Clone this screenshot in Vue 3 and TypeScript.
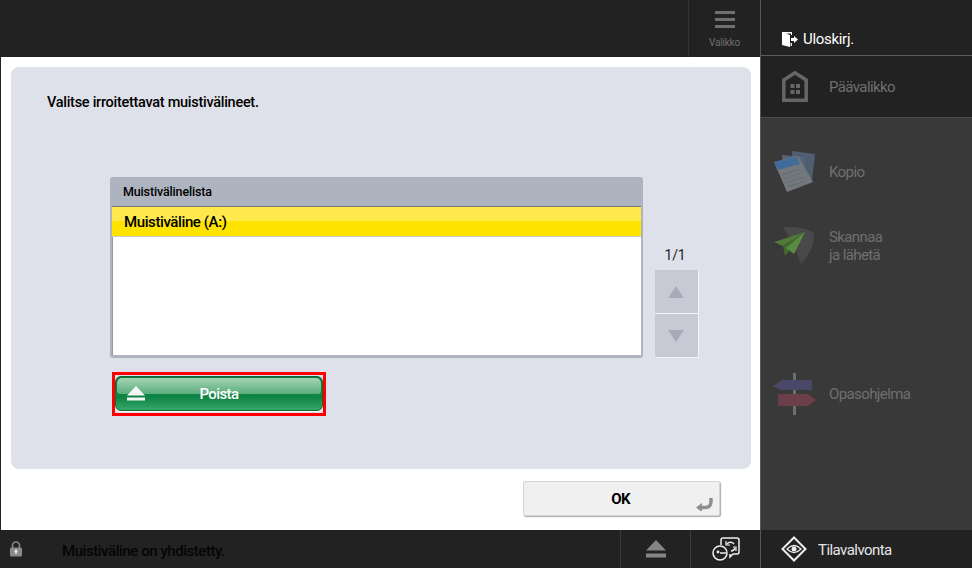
<script setup lang="ts">
const apps = [
  { key: 'copy', lines: ['Kopio'] },
  { key: 'send', lines: ['Skannaa', 'ja lähetä'] },
  { key: 'empty', lines: [] as string[] },
  { key: 'guide', lines: ['Opasohjelma'] },
]
</script>

<template>
  <div class="screen">
    <div class="main">
      <header class="topbar">
        <div class="menu-btn">
          <svg width="20" height="18" viewBox="0 0 20 18">
            <path d="M0 1.5h20M0 8.5h20M0 15.5h20" stroke="#6f6f6f" stroke-width="3" />
          </svg>
          <span>Valikko</span>
        </div>
      </header>

      <div class="content">
        <section class="panel">
          <p class="prompt">Valitse irroitettavat muistivälineet.</p>
          <div class="list-row">
            <div class="list">
              <div class="list-head">Muistivälinelista</div>
              <div class="list-body">
                <div class="list-item">Muistiväline (A:)</div>
              </div>
            </div>
            <div class="pager">
              <span class="page-no">1/1</span>
              <div class="page-btns">
                <button class="page-btn"><i class="tri up"></i></button>
                <button class="page-btn"><i class="tri down"></i></button>
              </div>
            </div>
          </div>
          <div class="eject-frame">
            <button class="eject">
              <svg class="eject-icon" width="18" height="15" viewBox="0 0 18 15">
                <path d="M9 0l9 9.5H0z" fill="#f2f7f3" />
                <rect y="11.5" width="18" height="3" fill="#f2f7f3" />
              </svg>
              <span class="eject-label">Poista</span>
            </button>
          </div>
        </section>
        <div class="actions">
          <button class="ok">
            OK
            <svg class="enter" width="18" height="14" viewBox="0 0 18 14">
              <path d="M15 1v3.500q0 6-6 6H4" fill="none" stroke="#8f8f8f" stroke-width="3.4" />
              <path d="M0 10.5l6-4.500v9z" fill="#8f8f8f" />
            </svg>
          </button>
        </div>
      </div>

      <footer class="status">
        <svg class="lock" width="14" height="16" viewBox="0 0 14 16">
          <path d="M3.5 7V4.5a3.5 3.5 0 0 1 7 0V7" fill="none" stroke="#8a8a8a" stroke-width="1.6" />
          <rect x="1" y="6.5" width="12" height="9" rx="1.5" fill="#8a8a8a" />
          <circle cx="7" cy="10" r="1.5" fill="#eee" />
          <rect x="6.3" y="10" width="1.4" height="3.2" fill="#eee" />
        </svg>
        <span class="status-text">Muistiväline on yhdistetty.</span>
        <div class="status-cell">
          <svg width="20" height="18" viewBox="0 0 20 18">
            <path d="M10 0l10 10.5H0z" fill="#858585" />
            <rect y="13.5" width="20" height="4" fill="#858585" />
          </svg>
        </div>
        <div class="status-cell">
          <svg width="28" height="24" viewBox="0 0 28 24" fill="none" stroke="#f0f0f0" stroke-width="1.5">
            <path d="M9 8V3q0-2 2-2h14q2 0 2 2v12q0 2-2 2h-4l-3 3v-3" />
            <circle cx="8" cy="16" r="7" fill="#222" />
            <circle cx="6" cy="15" r="1.4" fill="#f0f0f0" stroke="none" />
            <path d="M8 16h6" />
            <path d="M15 7a4.500 4.500 0 0 1 7 0M23 11a4.500 4.500 0 0 1-4 3" />
            <path d="M14 4v4h4M24 14v-4h-3" stroke-width="1.2" />
          </svg>
        </div>
      </footer>
    </div>

    <aside class="side">
      <div class="logout">
        <svg width="16" height="15" viewBox="0 0 16 15">
          <path d="M0 0h10v3H9V1.500H4L8 3v12L0 13z" fill="#fff" />
          <path d="M8.500 11H10v3H8.500z" fill="#ddd" />
          <path d="M9 6h3V4l4 3.500-4 3.500V9H9z" fill="#fff" />
        </svg>
        <span>Uloskirj.</span>
      </div>
      <div class="home">
        <svg width="26" height="31" viewBox="0 0 26 31">
          <path d="M13 1.700L24.200 9v20.200H1.800V9z" fill="none" stroke="#666" stroke-width="3.500" />
          <path d="M8.500 13h4v4h-4zM14 13h4v4h-4zM8.500 19h4v4h-4zM14 19h4v4h-4z" fill="#666" />
        </svg>
        <span class="app-label">Päävalikko</span>
      </div>
      <div class="apps">
        <div v-for="app in apps" :key="app.key" class="app">
          <div class="app-icon">
            <svg v-if="app.key === 'copy'" width="42" height="44" viewBox="0 0 42 44">
              <path d="M18 1l23 3-3 26-20-4z" fill="#4f5e70" />
              <path d="M8 5l22 2 2 24-22 2z" fill="#566679" />
              <path d="M0 12l24-6 15 26-26 10z" fill="#73787d" />
              <path d="M0 12l23-5 3 7-23 6z" fill="#3f6c99" />
              <path d="M8 25l17-6M10 29l17-6M12 33l17-6M14 37l17-6" stroke="#666b70" stroke-width="1" />
            </svg>
            <svg v-else-if="app.key === 'send'" width="42" height="38" viewBox="0 0 42 38">
              <path d="M9 0q21-1 31 6 1 16-13 31Q22 22 9 0z" fill="#494949" />
              <path d="M31 5L0 15l9 4z" fill="#4f7a3a" />
              <path d="M31 5L9 19l2 10z" fill="#42692f" />
              <path d="M31 5L12 21l8 6z" fill="#5b8a43" />
            </svg>
            <svg v-else-if="app.key === 'guide'" width="44" height="42" viewBox="0 0 44 42">
              <rect x="20" y="0" width="3" height="42" fill="#6e6e6e" />
              <path d="M0 13l9-6h30v10H8z" fill="#4a4868" />
              <path d="M5 21h30l8 6-8 6H5z" fill="#6a3f4a" />
            </svg>
          </div>
          <span class="app-label">
            <template v-for="line in app.lines" :key="line">{{ line }}<br /></template>
          </span>
        </div>
      </div>
      <div class="monitor">
        <svg width="26" height="26" viewBox="0 0 26 26" fill="none" stroke="#eee">
          <path d="M13 1.500L24.500 13 13 24.500 1.500 13z" stroke-width="2" />
          <path d="M6 13q7-7 14 0q-7 7-14 0z" stroke-width="1.200" />
          <circle cx="13" cy="13" r="2.500" fill="#eee" stroke="none" />
        </svg>
        <span>Tilavalvonta</span>
      </div>
    </aside>
  </div>
</template>

<style>
html,
body {
  margin: 0;
  overflow: hidden;
}
</style>

<style scoped>
.screen {
  display: grid;
  grid-template-columns: 760px 212px;
  width: 972px;
  height: 568px;
  font-family: Roboto, "Liberation Sans", sans-serif;
  overflow: hidden;
  background: #fff;
}

.main {
  display: flex;
  flex-direction: column;
  height: 568px;
}

.topbar {
  display: flex;
  justify-content: flex-end;
  height: 57px;
  flex-shrink: 0;
  background: #222;
}

.menu-btn {
  display: flex;
  flex-direction: column;
  align-items: center;
  width: 72px;
  padding-top: 11px;
  box-sizing: border-box;
  border-left: 1px solid #333;
  color: #6e6e6e;
  font-size: 10px;
  letter-spacing: -0.2px;
}

.menu-btn span {
  margin-top: 8px;
}

.content {
  display: flex;
  flex: 1;
  flex-direction: column;
  border-left: 1px solid #222;
  padding: 10px 9px 0 10px;
}

.panel {
  height: 402px;
  box-sizing: border-box;
  border-radius: 8px;
  background: #dfe1ea;
  padding: 27px 0 0 36px;
}

.prompt {
  margin: 0;
  color: #000;
  font-size: 14.500px;
  line-height: 17px;
  font-weight: 500;
  letter-spacing: -0.28px;
}

.list-row {
  display: flex;
  align-items: flex-end;
  gap: 12px;
  margin: 66px 0 0 63px;
}

.list {
  width: 533px;
  height: 181px;
  box-sizing: border-box;
  border-radius: 3px;
  background: #aeb3c0;
  padding: 0 2px 3px 2px;
}

.list-head {
  height: 29px;
  padding-left: 11px;
  color: #000;
  font-size: 12.500px;
  font-weight: 500;
  line-height: 29px;
  letter-spacing: -0.15px;
}

.list-body {
  height: 149px;
  box-sizing: border-box;
  border-top: 1px solid #777;
  background: #fff;
  box-shadow: inset 1px 0 0 #999;
}

.list-item {
  height: 30px;
  box-sizing: border-box;
  border-bottom: 1px solid #ccc;
  background: linear-gradient(180deg, #ffe94d 0 50%, #ffe400 50% 100%);
  padding-left: 12px;
  color: #000;
  font-size: 15px;
  font-weight: 500;
  line-height: 31px;
  letter-spacing: -0.4px;
}

.pager {
  display: flex;
  flex-direction: column;
  align-items: center;
  width: 43px;
}

.page-no {
  margin: 0 3px 7px 0;
  color: #222;
  font-size: 14px;
  line-height: 16px;
  letter-spacing: -0.2px;
}

.page-btns {
  display: flex;
  flex-direction: column;
  gap: 1px;
  background: #f3f4f8;
  border-radius: 2px;
  padding: 0 1px 1px 0;
}

.page-btn {
  display: flex;
  align-items: center;
  justify-content: center;
  width: 43px;
  height: 43px;
  border: 0;
  background: #c7cad5;
  padding: 0;
}

.tri {
  width: 0;
  height: 0;
  border-left: 8px solid transparent;
  border-right: 8px solid transparent;
}

.tri.up {
  border-bottom: 12px solid #a7abb8;
}

.tri.down {
  border-top: 12px solid #a7abb8;
}

.eject-frame {
  width: 214px;
  height: 44px;
  box-sizing: border-box;
  margin: 14px 0 0 65px;
  border: 3px solid #f00;
  padding: 1px 0 2px;
  background: #dfe1ea;
}

.eject {
  position: relative;
  display: block;
  width: 100%;
  height: 100%;
  border: 1px solid #0a6b35;
  border-radius: 6px;
  background: linear-gradient(180deg, #0b7a3c 0%, #0f8545 62%, #35a86a 100%);
  color: #fff;
  font-family: inherit;
  font-size: 15px;
  font-weight: 500;
  letter-spacing: -0.6px;
  box-shadow: 0 1px 0 #fff;
  padding: 0;
}

.eject::before {
  content: '';
  position: absolute;
  top: 1px;
  left: 1px;
  right: 1px;
  height: 16px;
  border-radius: 5px 5px 3px 3px;
  background: linear-gradient(180deg, #a3d4b3 0%, #5bad7d 100%);
}

.eject-icon {
  position: absolute;
  left: 11px;
  top: 9px;
}

.eject-label {
  position: relative;
}

.actions {
  display: flex;
  justify-content: flex-end;
  padding: 12px 31px 0 0;
}

.ok {
  position: relative;
  width: 197px;
  height: 35px;
  border: 1px solid #d4d4d4;
  border-radius: 2px;
  background: #f0f0f0;
  box-shadow: 1px 1px 1px #aaa;
  color: #000;
  font-family: inherit;
  font-size: 15px;
  font-weight: 700;
  letter-spacing: -0.8px;
  padding: 0 2px 0 0;
}

.enter {
  position: absolute;
  right: 5px;
  bottom: 4px;
}

.status {
  display: flex;
  align-items: center;
  height: 38px;
  flex-shrink: 0;
  background: #222;
}

.lock {
  margin-left: 9px;
}

.status-text {
  flex: 1;
  margin: 4px 0 0 39px;
  color: #050505;
  font-size: 15px;
  font-weight: 500;
  letter-spacing: -0.45px;
}

.status-cell {
  display: flex;
  align-items: center;
  justify-content: center;
  width: 70px;
  height: 38px;
  box-sizing: border-box;
  border-left: 1px solid #3a3a3a;
}

.side {
  display: flex;
  flex-direction: column;
  border-left: 1px solid #585858;
  box-sizing: border-box;
  height: 568px;
  background: #393939;
}

.logout {
  display: flex;
  align-items: center;
  gap: 5px;
  height: 56px;
  box-sizing: border-box;
  border-bottom: 1px solid #5c5c5c;
  background: #222;
  padding: 23px 0 0 21px;
  color: #fff;
  font-size: 15px;
  letter-spacing: -0.3px;
}

.home {
  display: flex;
  align-items: center;
  height: 62px;
  flex-shrink: 0;
  box-sizing: border-box;
  border-bottom: 1px solid #4c4c4c;
  background: #222;
  padding-left: 21px;
}

.home .app-label {
  margin-left: 21px;
}

.app-label {
  color: #6f6f6f;
  font-size: 15px;
  line-height: 18px;
  letter-spacing: -0.6px;
}

.apps {
  flex: 1;
  padding-top: 17px;
}

.app {
  display: flex;
  align-items: center;
  height: 74px;
  padding-left: 12px;
}

.app-icon {
  display: flex;
  justify-content: center;
  width: 44px;
  margin-right: 12px;
}

.monitor {
  display: flex;
  align-items: center;
  gap: 11px;
  height: 38px;
  flex-shrink: 0;
  background: #222;
  padding-left: 20px;
  color: #e6e6e6;
  font-size: 15px;
  letter-spacing: -0.55px;
}

.monitor span {
  margin-top: 2px;
}
</style>
